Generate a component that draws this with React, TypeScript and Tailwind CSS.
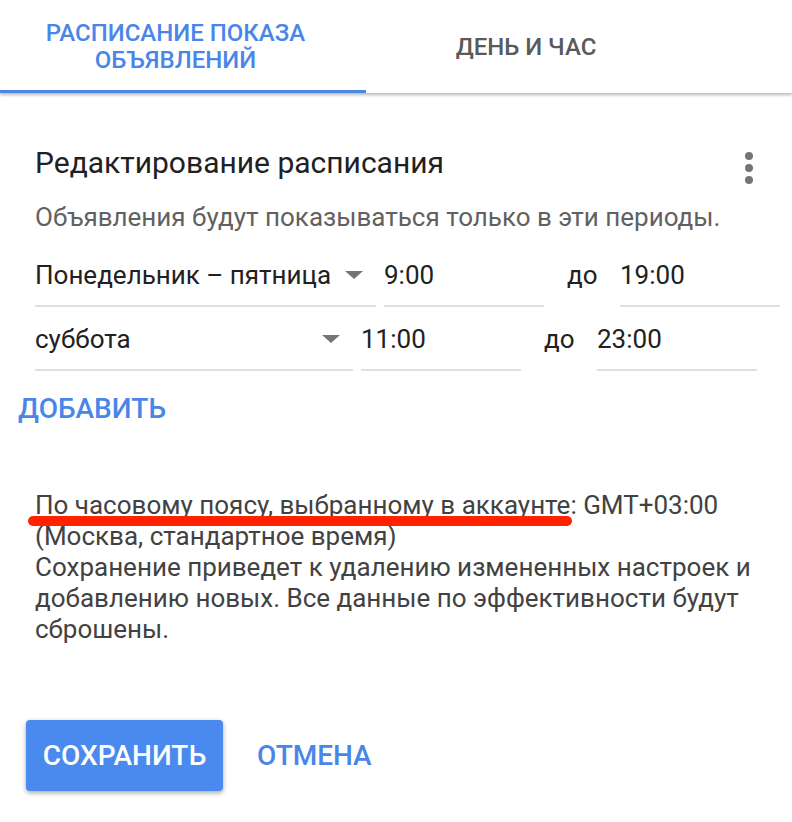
export default function App() {
  const font = { fontFamily: "Roboto, 'Noto Sans', sans-serif" };

  return (
    <div className="w-[792px] h-[822px] bg-white relative overflow-hidden" style={font}>
      {/* tabs */}
      <div className="flex h-[93px] shadow-[0_2px_3px_rgba(0,0,0,0.28)] relative z-10 bg-white">
        <div className="w-[366px] flex items-center border-b-[3px] border-[#4a86e8]">
          <div className="w-[351px] text-center text-[24px] leading-[27px] font-medium text-[#4a86e8] mt-[3px]">
            РАСПИСАНИЕ ПОКАЗА
            <br />
            ОБЪЯВЛЕНИЙ
          </div>
        </div>
        <div className="w-[320px] flex items-center justify-center text-[24px] font-medium text-[#5a5a5a]">
          ДЕНЬ И ЧАС
        </div>
      </div>

      <div className="pl-[35px] pr-[39px]">
        <div className="flex items-start justify-between mt-[53px]">
          <div className="text-[30px] leading-[34px] text-[#212121]">Редактирование расписания</div>
          <div className="flex flex-col gap-[4px] mt-[6px]">
            <span className="w-[8px] h-[8px] rounded-full bg-[#757575]" />
            <span className="w-[8px] h-[8px] rounded-full bg-[#757575]" />
            <span className="w-[8px] h-[8px] rounded-full bg-[#757575]" />
          </div>
        </div>
        <div className="mt-[18px] text-[26px] leading-[30px] text-[#616161] whitespace-nowrap">
          Объявления будут показываться только в эти периоды.
        </div>

        <ScheduleRow day="Понедельник – пятница" dayWidth="w-[341px]" from="9:00" to="19:00" className="mt-[28px]" />
        <ScheduleRow day="суббота" dayWidth="w-[318px]" from="11:00" to="23:00" className="mt-[17px]" />
      </div>

      <div className="pl-[18px] mt-[22px] text-[28px] leading-[32px] font-medium text-[#4a86e8]">ДОБАВИТЬ</div>

      <div className="pl-[35px] mt-[65px] text-[26px] leading-[31px] text-[#424242] whitespace-nowrap">
        По часовому поясу, выбранному в аккаунте: GMT+03:00
        <br />
        (Москва, стандартное время)
        <br />
        Сохранение приведет к удалению измененных настроек и
        <br />
        добавлению новых. Все данные по эффективности будут
        <br />
        сброшены.
      </div>

      {/* red annotation stroke */}
      <div className="absolute left-[28px] top-[516px] w-[544px] h-[10px] rounded-full bg-[#ff2200]" />

      <div className="pl-[26px] mt-[75px] flex items-center">
        <button className="h-[71px] w-[197px] rounded-[4px] bg-[#4a89ee] text-white text-[28px] font-medium shadow-[0_2px_5px_rgba(0,0,0,0.35)]">
          СОХРАНИТЬ
        </button>
        <button className="ml-[34px] text-[28px] font-medium text-[#4a86e8]">ОТМЕНА</button>
      </div>
    </div>
  );
}

function ScheduleRow({
  day,
  dayWidth,
  from,
  to,
  className,
}: {
  day: string;
  dayWidth: string;
  from: string;
  to: string;
  className?: string;
}) {
  return (
    <div className={"flex items-start text-[26px] leading-[30px] text-[#212121] " + (className ?? "")}>
      <div className={dayWidth + " shrink-0 flex items-center justify-between pb-[15px] border-b-2 border-[#e0e0e0]"}>
        <span className="whitespace-nowrap">{day}</span>
        <span className="mr-[13px] w-0 h-0 border-l-[9px] border-r-[9px] border-t-[8px] border-l-transparent border-r-transparent border-t-[#757575]" />
      </div>
      <div className="ml-[8px] w-[160px] shrink-0 pb-[15px] border-b-2 border-[#e0e0e0]">{from}</div>
      <div className="ml-[23px] mr-[24px] w-[29px] shrink-0">до</div>
      <div className="w-[160px] shrink-0 pb-[15px] border-b-2 border-[#e0e0e0]">{to}</div>
    </div>
  );
}
